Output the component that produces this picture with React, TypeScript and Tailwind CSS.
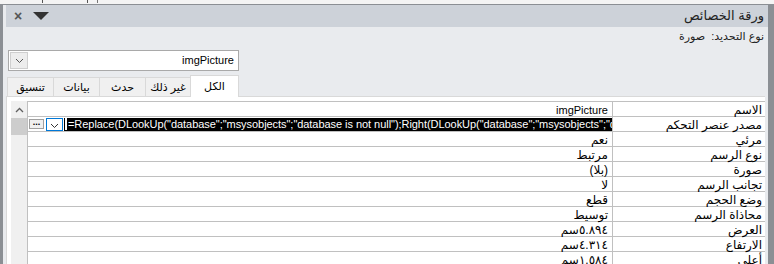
import React from 'react';

const formula =
	'=Replace(DLookUp("database";"msysobjects";"database is not null");Right(DLookUp("database";"msysobjects";"database is not null");8))';

const rows: { label: string; value: string; latin?: boolean; selected?: boolean }[] = [
	{ label: 'الاسم', value: 'imgPicture', latin: true },
	{ label: 'مصدر عنصر التحكم', value: formula, selected: true },
	{ label: 'مرئي', value: 'نعم' },
	{ label: 'نوع الرسم', value: 'مرتبط' },
	{ label: 'صورة', value: '(بلا)' },
	{ label: 'تجانب الرسم', value: 'لا' },
	{ label: 'وضع الحجم', value: 'قطع' },
	{ label: 'محاذاة الرسم', value: 'توسيط' },
	{ label: 'العرض', value: '٥.٨٩٤سم' },
	{ label: 'الارتفاع', value: '٤.٣١٤سم' },
	{ label: 'أعلى', value: '١.٥٨٤سم' },
];

const tabs = [
	{ label: 'تنسيق', w: 'w-[46px]' },
	{ label: 'بيانات', w: 'w-[46px]' },
	{ label: 'حدث', w: 'w-[46px]' },
	{ label: 'غير ذلك', w: 'w-[45px]' },
];

function Chevron({ color = '#555' }: { color?: string }) {
	return (
		<svg width="9" height="6" viewBox="0 0 9 6">
			<path d="M1 1 L4.5 4.5 L8 1" fill="none" stroke={color} strokeWidth="1" />
		</svg>
	);
}

export default function App() {
	return (
		<div className="w-[774px] h-[264px] overflow-hidden bg-[#f4f4f4] font-['Liberation_Sans','DejaVu_Sans',sans-serif] text-black">
			<div className="h-[4px] bg-[#f4f4f4] flex items-start">
				<span className="ml-[42px] w-px h-[3px] bg-[#555]" />
				<span className="ml-[44px] w-px h-[3px] bg-[#555]" />
				<span className="ml-[9px] w-px h-[3px] bg-[#777]" />
			</div>
			<div className="h-[260px] border-t border-l-[3px] border-r-[6px] border-[#8b8f94] bg-[#e9ebee] pl-[3px] flex flex-col">
				{/* title bar */}
				<div className="h-[22px] shrink-0 bg-[#cdd2d9] flex items-center pl-[8px] pr-[4px]">
					<span className="text-[#555] text-[14px] font-bold leading-none w-[8px]">×</span>
					<svg width="16" height="8" viewBox="0 0 16 8" className="ml-[11px]">
						<path d="M0 0 H16 L8 8 Z" fill="#333" />
					</svg>
					<div dir="rtl" className="flex-1 text-right text-[13px] leading-[24px] text-[#222]">
						ورقة الخصائص
					</div>
				</div>

				<div dir="rtl" className="h-[18px] shrink-0 text-[11px] leading-[18px] pr-[4px] text-[#222]">
					نوع التحديد:&nbsp; صورة
				</div>

				{/* combo */}
				<div className="mt-[5px] ml-[2px] w-[231px] h-[21px] shrink-0 border border-[#a9a9a9] bg-white flex items-stretch">
					<div className="w-[18px] m-px bg-[#ededed] border border-[#cfcfcf] flex items-center justify-center">
						<Chevron />
					</div>
					<div className="flex-1 text-right text-[11px] leading-[19px] pr-[4px]">imgPicture</div>
				</div>

				{/* tabs */}
				<div className="mt-[4px] ml-[1px] h-[21px] shrink-0 flex items-end relative z-10">
					{tabs.map((t) => (
						<div
							key={t.label}
							dir="rtl"
							className={`${t.w} h-[19px] bg-[#f0f0f0] border-t border-l border-[#d9d9d9] text-[11px] leading-[18px] text-center`}
						>
							{t.label}
						</div>
					))}
					<div
						dir="rtl"
						className="w-[49px] h-[22px] -mb-px bg-white border-t border-l border-r border-[#d9d9d9] text-[11px] leading-[20px] text-center"
					>
						الكل
					</div>
				</div>

				{/* content */}
				<div className="flex-1 mr-[3px] bg-white border-t border-l border-[#d9d9d9] pt-[4px] pl-[4px] flex min-h-0">
					{/* scrollbar */}
					<div className="w-[16px] bg-[#f0f0f0] flex flex-col items-center shrink-0">
						<div className="h-[17px] flex items-center justify-center">
							<svg width="9" height="6" viewBox="0 0 9 6">
								<path d="M1 5 L4.5 1.5 L8 5" fill="none" stroke="#606060" strokeWidth="1.3" />
							</svg>
						</div>
						<div className="w-[16px] h-[17px] bg-[#cdcdcd]" />
					</div>

					{/* grid */}
					<div className="flex-1 border-t border-l border-[#c0c0c0] min-w-0">
						{rows.map((r) => (
							<div key={r.label} className="h-[15px] border-b border-[#c0c0c0] flex">
								<div className="flex-1 min-w-0 border-r border-[#c0c0c0]">
									{r.selected ? (
										<div className="flex items-center h-[14px] pl-px">
											<div className="w-[15px] h-[10px] bg-[#f0f0f0] border border-[#a0a0a0] flex items-center justify-center text-[9px] font-bold leading-none pb-[3px]">
												...
											</div>
											<div className="ml-[2px] w-[17px] h-[13px] border border-[#0078d7] bg-white flex items-end justify-center pb-px">
												<Chevron color="#333" />
											</div>
											<div className="ml-[1px] flex-1 min-w-0 h-[13px] bg-black text-white pl-[1px] flex items-center">
												<span className="w-[2px] h-[12px] bg-white mr-[1px] shrink-0" />
												<span className="flex-1 min-w-0 overflow-hidden whitespace-nowrap text-[11px] leading-[14px] tracking-[-0.05px]">
													{r.value}
												</span>
											</div>
										</div>
									) : (
										<div
											dir="rtl"
											className={`h-[14px] text-right pr-[4px] whitespace-nowrap ${r.latin ? 'text-[11px] leading-[17px]' : 'text-[12px] leading-[16px]'}`}
										>
											{r.value}
										</div>
									)}
								</div>
								<div
									dir="rtl"
									className="w-[152px] h-[14px] shrink-0 text-right pr-[3px] whitespace-nowrap text-[12px] leading-[16px]"
								>
									{r.label}
								</div>
							</div>
						))}
					</div>
				</div>
			</div>
		</div>
	);
}
